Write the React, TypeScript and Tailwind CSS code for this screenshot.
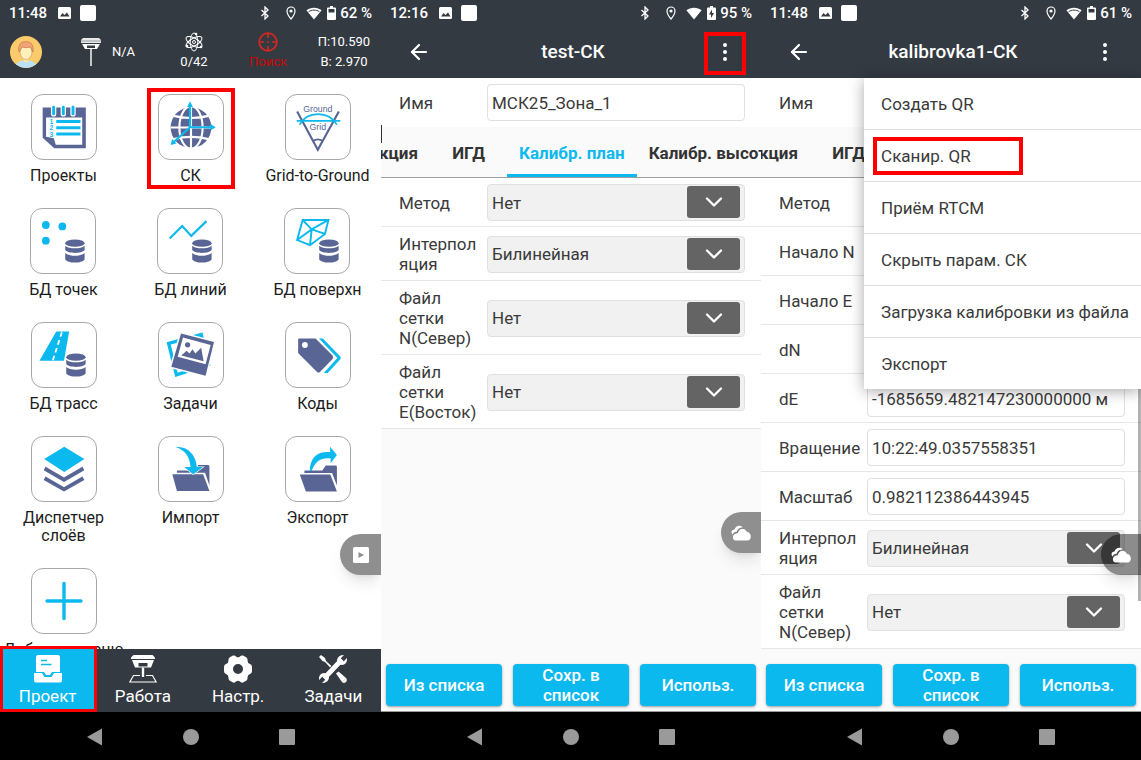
import type { ReactNode } from "react";
import { ArrowLeft, ChevronDown } from "lucide-react";

const CYAN = "#0cb9ef";
const SLATE = "#596695";

/* ---------- status bar ---------- */

function StatusBar({ time, battery, charging, wifiFull }: { time: string; battery: string; charging?: boolean; wifiFull?: boolean }) {
  return (
    <div className="flex h-[26px] items-center justify-between px-[9px] text-[15px] font-medium leading-5 text-white">
      <div className="flex items-center">
        <span>{time}</span>
        <svg className="ml-[11px] h-3 w-[13px]" viewBox="0 0 13 12">
          <rect width="13" height="12" rx="1.5" fill="#fff" />
          <path d="M2 9.5 4.5 6l2 2L9 5.5l2.5 4Z" fill="#343a42" />
        </svg>
        <span className="ml-[9px] size-4 rounded-[2px] bg-white" />
      </div>
      <div className="flex items-center">
        <svg className="mr-4 h-[14px] w-[10px]" viewBox="0 0 10 14" fill="none" stroke="#fff" strokeWidth="1.3">
          <path d="M1.5 4 8 10 5 13V1l3 3-6.5 6" />
        </svg>
        <svg className="mr-[10px] h-[14px] w-[10px]" viewBox="0 0 10 14" fill="none" stroke="#fff" strokeWidth="1.2">
          <path d="M5 13C2 9.500 1 7.200 1 5a4 4 0 0 1 8 0c0 2.200-1 4.500-4 8Z" />
          <circle cx="5" cy="5" r="1" fill="#fff" />
        </svg>
        <svg className="mr-[5px] h-[13px] w-4" viewBox="0 0 16 13">
          <path d="M8 12.500.4 3.300C4.500-.2 11.500-.2 15.600 3.300Z" fill="#fff" />
          {!wifiFull && <path d="M2.600 4.700C5.600 2.600 10.400 2.600 13.400 4.700" fill="none" stroke="#343a42" strokeWidth="1" />}
        </svg>
        <svg className="mr-1 h-[14px] w-[9px]" viewBox="0 0 9 14">
          <path d="M3 0h3v1.500h2q1 0 1 1V13q0 1-1 1H1q-1 0-1-1V2.500q0-1 1-1h2Z" fill="#fff" />
          {charging ? (
            <path d="M5 3.500 2 8.500h2v3.500l3-5H5Z" fill="#343a42" />
          ) : (
            <path d="M1.500 3h6v3.500h-6Z" fill="#343a42" />
          )}
        </svg>
        <span>{battery}</span>
      </div>
    </div>
  );
}

function SystemNav() {
  return (
    <nav className="flex h-12 shrink-0 items-center justify-center gap-20 bg-black pt-0.5">
      <button aria-label="Back">
        <svg className="h-[18px] w-4" viewBox="0 0 16 18">
          <path d="M0 9 15 .5v17Z" fill="#9a9a9a" />
        </svg>
      </button>
      <button aria-label="Home" className="size-4 rounded-full bg-[#9a9a9a]" />
      <button aria-label="Recent" className="size-4 rounded-[1px] bg-[#9a9a9a]" />
    </nav>
  );
}

/* ---------- icons of the project screen, 66x66 box ---------- */

function Database() {
  return (
    <g fill={SLATE}>
      <ellipse cx="45.300" cy="35.200" rx="10" ry="3.800" />
      <path d="M35.300 37.800c4 3.700 16 3.700 20 0v4.500c-3 4-17 4-20 0Z" />
      <path d="M35.300 45.500c4 3.700 16 3.700 20 0v6.500c-3 4.300-17 4.300-20 0Z" />
    </g>
  );
}

const icons: Record<string, ReactNode> = {
  projects: (
    <>
      <path d="M11 13H55.500V55H23L11 44Z" fill={SLATE} />
      <path d="M14.500 23.300H51.800V51.300H24.500L22.500 44.500 14.500 43Z" fill="#fff" />
      {[22.3, 32.3, 42.3].map((x) => (
        <g key={x} strokeLinecap="round">
          <path d={`M${x} 12.500V19.500`} stroke="#fff" strokeWidth="5.500" />
          <path d={`M${x} 12.500V19.500`} stroke={CYAN} strokeWidth="3" />
        </g>
      ))}
      {[27.3, 33.8, 40.3].map((y, i) => (
        <g key={y}>
          <path d={`M25 ${y}H50`} stroke={CYAN} strokeWidth="3" />
          <text x="18" y={y + 2.5} fontSize="7" fontWeight="700" fill={CYAN}>{i + 1}</text>
        </g>
      ))}
    </>
  ),
  globe: (
    <>
      <circle cx="33" cy="33.500" r="21" fill={SLATE} />
      <g fill="none" stroke="#fff" strokeWidth="2.200">
        <path d="M33 12V55M12 33.500H54" />
        <ellipse cx="33" cy="33.500" rx="12" ry="22" />
        <path d="M15 21.500Q33 26 51 21.500M15 45.500Q33 41 51 45.500" />
      </g>
      <g fill="none" stroke={CYAN} strokeWidth="2.200">
        <path d="M32 10V33.300H55M32 33.300 14 49.500" />
      </g>
      <g fill={CYAN}>
        <path d="M32 6.500 35 12.500H29ZM58.500 33.300 53 36.500V30ZM12 51.500 13.500 45.500 18 50Z" />
      </g>
    </>
  ),
  gridToGround: (
    <>
      <path d="M11.500 17 32.800 56.500 54.500 17" fill="none" stroke={SLATE} strokeWidth="2.200" />
      <path d="M27.500 47.500Q32.800 44 38 47.500" fill="none" stroke={SLATE} strokeWidth="1.800" />
      <path d="M11 26.700H56M14 30.500C22 16 44 16 52.500 30.500" fill="none" stroke={CYAN} strokeWidth="1.800" />
      <text x="32.800" y="17.500" fontSize="9" textAnchor="middle" fill={SLATE}>Ground</text>
      <text x="32.800" y="35.800" fontSize="9" textAnchor="middle" fill={SLATE}>Grid</text>
    </>
  ),
  points: (
    <>
      <g fill={CYAN}>
        <circle cx="15.300" cy="16.500" r="4" />
        <circle cx="32.300" cy="18" r="4" />
        <circle cx="15.300" cy="32.700" r="4" />
      </g>
      <Database />
    </>
  ),
  lines: (
    <>
      <path d="M12 30.500 25 17.500 34.300 27.700 50 12.500" fill="none" stroke={CYAN} strokeWidth="2.200" />
      <Database />
    </>
  ),
  surfaces: (
    <>
      <path
        d="M18.200 11.300H44.800L41.200 25.700 25.800 37.300 12.500 32ZM18.200 11.300 27.500 21 44.800 11.300M27.500 21 41.200 25.700M27.500 21 25.800 37.300M27.500 21 12.500 32"
        fill="none"
        stroke={CYAN}
        strokeWidth="2"
      />
      <Database />
    </>
  ),
  roads: (
    <>
      <path d="M25 8.700H38.300L33 39H7.700Z" fill={CYAN} />
      <path d="M30.800 9.500 21.500 38.500" stroke="#fff" strokeWidth="1.800" strokeDasharray="5 3.500" />
      <Database />
    </>
  ),
  photos: (
    <>
      <path d="M10 21 43.500 12 51 43 18 53.500Z" fill="none" stroke={CYAN} strokeWidth="3.500" />
      <path d="M22.700 10.700 56.700 19.700 48 54.500 12.700 45Z" fill={SLATE} stroke="#fff" strokeWidth="3" paintOrder="stroke" />
      <path d="M24.700 15 53.300 22.700 48 42.500 19.300 34.700Z" fill="#fff" />
      <circle cx="29.500" cy="22.500" r="2.700" fill={SLATE} />
      <path d="M23 33.500 28.500 28.500 31.500 31.500 34.500 27 37.500 31.500 43.500 25.500 46 39.500Z" fill={SLATE} />
    </>
  ),
  codes: (
    <>
      <path d="M12.500 17Q12.500 16 13.500 16H30.500L48 33.500Q49.500 35.500 48 37L35 50.500Q33.500 51.800 32 50.500L12.500 31Z" fill={SLATE} />
      <circle cx="19.500" cy="22.700" r="3" fill="#fff" />
      <path d="M34 16H38L56 34.500Q57 36 56 37.500L43 51.500H39L53 36Z" fill={CYAN} />
    </>
  ),
  layers: (
    <>
      <path d="M33.300 10 54 22.800 33.300 36 12.500 22.800Z" fill={CYAN} />
      <path d="M13 32.500 33 44 53 32.500M13 42.500 33 54 53 42.500" fill="none" stroke={SLATE} strokeWidth="4" />
    </>
  ),
  importFolder: (
    <>
      <path d="M18.500 36.800V34.500H37L40.500 29H50.500Q52 29 52 30.500V50L47.500 36.800Z" fill={SLATE} />
      <path d="M13.700 38.500H45.500L52 55.700H18.500Z" fill={SLATE} />
      <path d="M17.500 10.500C29 9 38 18 39 31H45.500L35.300 38.500 26 31H32.500C32 20 26 13 17.500 10.500Z" fill={CYAN} stroke="#fff" strokeWidth="1.200" paintOrder="stroke" />
    </>
  ),
  exportFolder: (
    <>
      <path d="M19 37V34.500H37.500L41 29.500H51Q52.500 29.500 52.500 31V50L47.500 37Z" fill={SLATE} />
      <path d="M14.200 38.800H45.700L52.500 56.300H20.500Z" fill={SLATE} />
      <path d="M24.500 35C25 20 33 14.500 45.500 15.500V10L52.500 18.500 46 27V22C36 21 30 25 26.500 35Z" fill={CYAN} />
    </>
  ),
  plus: <path d="M33 15V51M15.500 33H50.500" stroke={CYAN} strokeWidth="3.500" strokeLinecap="round" />,
};

const tiles = [
  { label: "Проекты", icon: "projects" },
  { label: "СК", icon: "globe", marked: true },
  { label: "Grid-to-Ground", icon: "gridToGround" },
  { label: "БД точек", icon: "points" },
  { label: "БД линий", icon: "lines" },
  { label: "БД поверхн", icon: "surfaces" },
  { label: "БД трасс", icon: "roads" },
  { label: "Задачи", icon: "photos" },
  { label: "Коды", icon: "codes" },
  { label: "Диспетчер слоёв", icon: "layers" },
  { label: "Импорт", icon: "importFolder" },
  { label: "Экспорт", icon: "exportFolder" },
  { label: "Добавить меню", icon: "plus" },
];

/* ---------- bottom tabs ---------- */

const tabs = [
  {
    label: "Проект",
    active: true,
    icon: (
      <>
        <path d="M4 0H24Q26 0 26 2V17H18L16 20H12L10 17H2V2Q2 0 4 0Z" />
        <path d="M7 5.500H13M7 9.500H17.500" stroke={CYAN} strokeWidth="1.500" />
        <path d="M0 18H8L10.500 22H17.500L20 18H28V25.500Q28 27.500 26 27.500H2Q0 27.500 0 25.500Z" />
      </>
    ),
  },
  {
    label: "Работа",
    icon: (
      <>
        <path d="M4.500 0H23.500L26 2.500V4H2V2.500Z" />
        <path d="M3 5H25L22 12.500H6ZM9.500 8V11.500H18.500V8Z" fillRule="evenodd" />
        <path d="M12.800 12.500H15.200V22H12.800Z" />
        <path d="M11 20.500H4.500L.8 27H27.200L23.500 20.500H17" fill="none" stroke="#fff" strokeWidth="1.200" />
      </>
    ),
  },
  {
    label: "Настр.",
    icon: (
      <path
        d="M9 0.500Q11 0 12 1.500 14 3.200 16 1.500 17 0 19 .5L22.500 2.500Q24 3.800 23.500 5.500 23.500 8.300 26 9 28 9.500 28 12V16Q28 18.500 26 19 23.500 19.700 23.500 22.500 24 24.200 22.500 25.500L19 27.500Q17 28 16 26.500 14 24.800 12 26.500 11 28 9 27.500L5.500 25.500Q4 24.200 4.500 22.500 4.500 19.700 2 19 0 18.500 0 16V12Q0 9.500 2 9 4.500 8.300 4.500 5.500 4 3.800 5.500 2.500ZM14 9A5 5 0 1 0 14 19 5 5 0 1 0 14 9Z"
        fillRule="evenodd"
      />
    ),
  },
  {
    label: "Задачи",
    icon: (
      <>
        <path d="M0 2 2 0 6 3 7 6 14.500 13 13 14.500 6 7 3.500 6Z" />
        <path d="M17 18.500 19.500 16.500 27 23Q29 25.500 26.500 27.500 24.500 28.500 23 27Z" />
        <path d="M6 22 22 6" stroke="#343a42" strokeWidth="6.500" />
        <path d="M5 23.500 23 4.500" stroke="#fff" strokeWidth="4.800" />
        <path d="M25 0 21.500 3.500 24.500 6.500 28 3Q28.500 9.500 23 10 17.500 9.500 18 5 19 0 25 0Z" />
        <path d="M3 28 6.500 24.500 3.500 21.500 0 25Q-.5 18.500 5 18 10.500 18.500 10 23 9 28 3 28Z" />
      </>
    ),
  },
];

function ProjectScreen() {
  return (
    <section className="relative flex min-h-0 min-w-0 flex-col overflow-hidden bg-white">
      <header className="bg-[#343a42] text-white">
        <StatusBar time="11:48" battery="62 %" />
        <div className="grid h-[52px] grid-cols-[52fr_112fr_60fr_88fr_64fr] items-center pr-[5px] text-[13px] leading-5">
          <svg className="size-8 justify-self-center" viewBox="0 0 32 32">
            <circle cx="16" cy="16" r="16" fill="#fbcb6b" />
            <path d="M6 28.500Q8 25 13 24.500H19Q24 25 26 28.500 16 35.500 6 28.500Z" fill="#b9e1f7" />
            <path d="M13.500 20H18.500V25Q16 28 13.500 25Z" fill="#fde5a8" />
            <ellipse cx="16" cy="16" rx="6" ry="7.500" fill="#fdf0b8" stroke="#c98e5e" strokeWidth=".6" />
            <path d="M9 16Q7 6 15.500 5.500 24.500 5.500 23 16 21 13 20.500 11 16 12.500 12 11Q11 13.500 9 16Z" fill="#f2a477" stroke="#b96d4a" strokeWidth=".6" />
          </svg>
          <div className="flex items-center justify-center gap-[11px]">
            <svg className="h-7 w-5" viewBox="0 0 20 28">
              <path d="M2 0H18L20 2V5H0V2Z" fill="#e8e8e8" />
              <path d="M0 3H20" stroke="#9b9fa4" strokeWidth="1" />
              <path d="M1 6H19L16 11H4ZM6 7.500V10H14V7.500Z" fill="#fff" fillRule="evenodd" />
              <path d="M10 11V28" stroke="#d6d6d6" strokeWidth="1.800" />
            </svg>
            <span>N/A</span>
          </div>
          <div className="flex flex-col items-center">
            <svg className="size-5" viewBox="0 0 20 20" fill="none" stroke="#fff" strokeWidth="1">
              <ellipse cx="10" cy="10" rx="3.800" ry="9" />
              <ellipse cx="10" cy="10" rx="3.800" ry="9" transform="rotate(60 10 10)" />
              <ellipse cx="10" cy="10" rx="3.800" ry="9" transform="rotate(120 10 10)" />
              <circle cx="10" cy="10" r="1.500" />
              <g fill="#fff" stroke="none">
                <circle cx="12" cy="2" r="1.300" />
                <circle cx="3" cy="14" r="1.300" />
                <circle cx="17" cy="15" r="1.300" />
              </g>
            </svg>
            <span>0/42</span>
          </div>
          <div className="flex flex-col items-center text-[#c80808]">
            <svg className="size-5" viewBox="0 0 20 20" fill="none" stroke="#d3281f" strokeWidth="1.700">
              <circle cx="10" cy="10" r="8.800" />
              <path d="M10 1V6M10 14V19M1 10H6M14 10H19" />
              <circle cx="10" cy="10" r="1" fill="#d3281f" stroke="none" />
            </svg>
            <span>Поиск</span>
          </div>
          <div className="flex flex-col items-center">
            <span>П:10.590</span>
            <span>В: 2.970</span>
          </div>
        </div>
      </header>

      <main className="grid min-h-0 flex-1 grid-cols-3 content-start gap-y-[23px] overflow-hidden pt-4">
        {tiles.map((tile) => (
          <div key={tile.label} className="flex justify-center">
            <button className="relative flex flex-col items-center gap-[7px] text-base leading-[18px] text-[#1c1c1c]">
              <svg className="size-[66px] rounded-xl border border-[#a8a8a8] font-['Liberation_Sans',sans-serif]" viewBox="0 0 66 66">
                {icons[tile.icon]}
              </svg>
              <span className="max-w-[124px]">{tile.label}</span>
              {tile.marked && <span className="absolute -inset-x-[11px] -bottom-1 -top-1.5 border-4 border-[#fe0000]" />}
            </button>
          </div>
        ))}
      </main>

      <button aria-label="Play" className="absolute right-0 top-[534px] flex h-[41px] w-[41px] items-center justify-center rounded-l-full bg-[#8f8f8f] shadow-lg">
        <svg className="size-4" viewBox="0 0 16 16">
          <rect width="16" height="16" rx="1.500" fill="#fff" />
          <path d="M5.500 5V11L11 8Z" fill="#8f8f8f" />
        </svg>
      </button>

      <nav className="grid h-[63px] shrink-0 grid-cols-4 bg-[#343a42] text-white">
        {tabs.map((tab) => (
          <button
            key={tab.label}
            className={`relative flex flex-col items-center gap-[3px] pt-1.5 text-[17px] leading-5 ${tab.active ? "bg-[#0cb9ef]" : ""}`}
          >
            <svg className="size-7" viewBox="0 0 28 28" fill="#fff">
              {tab.icon}
            </svg>
            <span>{tab.label}</span>
            {tab.active && <span className="absolute -right-0.5 -top-[3px] bottom-0 left-0 border-[3px] border-[#fe0000]" />}
          </button>
        ))}
      </nav>
      <SystemNav />
    </section>
  );
}

/* ---------- coordinate system editor ---------- */

type Field = { id: string; label: string; value: string; select?: boolean };

function FieldRow({ field }: { field: Field }) {
  return (
    <div className="flex items-center gap-1 border-b border-[#e6e6e6] bg-white pb-[5px] pl-[18px] pr-4 pt-1.5">
      <label htmlFor={field.id} className="w-[84px] shrink-0 break-words py-px">
        {field.label}
      </label>
      {field.select ? (
        <div className="relative min-w-0 flex-1">
          <select
            id={field.id}
            defaultValue={field.value}
            className="block h-[37px] w-full appearance-none rounded border border-[#e0e0e0] bg-[#f1f1f1] pl-1"
          >
            <option>{field.value}</option>
          </select>
          <span className="pointer-events-none absolute right-[5px] top-[2px] flex h-8 w-[53px] items-center justify-center rounded-[3px] bg-[#646464]">
            <ChevronDown className="size-7 text-white" strokeWidth={2} />
          </span>
        </div>
      ) : (
        <input
          id={field.id}
          defaultValue={field.value}
          className="h-[37px] min-w-0 flex-1 rounded border border-[#e0e0e0] bg-white pl-1"
        />
      )}
    </div>
  );
}

function Cloud() {
  return (
    <svg className="h-4 w-5" viewBox="0 0 20 16" fill="#fff">
      <path d="M1.500 9.500C-.5 7 1 4.500 3.500 4.500 4.500 .5 9.500-.5 12 2.500 8.500 2.500 6.500 4 5.800 6.500 3.500 6.800 2.200 8 1.500 9.500Z" />
      <path d="M4.800 15.500C1.300 15.500 1 10.500 3.500 9.300 4.500 8.300 5.800 8.100 6.800 8.200 7.500 3 13.800 2 15.800 6.800 20.500 7.200 21.500 15 16.500 15.500Z" />
      <path d="M2.500 9.500C4 7.500 5.500 7.500 6.500 7.500 7.500 3.500 10.500 2.700 13 3.300" fill="none" stroke="#7b7b7b" strokeWidth=".8" />
    </svg>
  );
}

const menuItems = ["Создать QR", "Сканир. QR", "Приём RTCM", "Скрыть парам. СК", "Загрузка калибровки из файла", "Экспорт"];

type EditorProps = {
  id: string;
  title: string;
  time: string;
  battery: string;
  charging?: boolean;
  name: string;
  fields: Field[];
  menuOpen?: boolean;
};

function EditorScreen({ id, title, time, battery, charging, name, fields, menuOpen }: EditorProps) {
  return (
    <section className="relative flex min-h-0 min-w-0 flex-col overflow-hidden bg-[#fafafa] text-[17px] leading-5 text-[#3a3a3a]">
      <header className="bg-[#343a42] text-white">
        <StatusBar time={time} battery={battery} charging={charging} wifiFull={charging} />
        <div className="flex h-[52px] items-center justify-between px-[26px]">
          <button aria-label="Back">
            <ArrowLeft className="size-6" strokeWidth={2.2} />
          </button>
          <h1 className="text-[19px] font-medium">{title}</h1>
          <button aria-label="Menu" className="relative flex h-6 w-5 flex-col items-center justify-center gap-[3px]">
            <span className="size-1 rounded-full bg-white" />
            <span className="size-1 rounded-full bg-white" />
            <span className="size-1 rounded-full bg-white" />
            {!menuOpen && <span className="absolute -inset-x-[11px] -bottom-[11px] -top-2 border-4 border-[#fe0000]" />}
          </button>
        </div>
      </header>

      <div className="relative flex items-center gap-1 bg-white py-1.5 pl-[18px] pr-4">
        <label htmlFor={`${id}-name`} className="w-[84px] shrink-0">Имя</label>
        <input
          id={`${id}-name`}
          defaultValue={name}
          className="h-[37px] min-w-0 flex-1 rounded border border-[#e0e0e0] bg-white pl-1"
        />
        {!menuOpen && <span className="absolute -bottom-4 left-0 h-[18px] w-px bg-[#333]" />}
      </div>

      <div className="flex h-[51px] shrink-0 overflow-hidden whitespace-nowrap border-b border-[#a0a0a0] font-bold text-[#333]">
        <button className="flex w-[49px] shrink-0 items-center justify-end overflow-hidden pr-3 pt-0.5">Проекция</button>
        <button className="w-[77px] shrink-0 pt-0.5">ИГД</button>
        <button className="shrink-0 border-b-[3px] border-[#0cb9ef] px-3 pt-[5px] text-[#0cb9ef]">Калибр. план</button>
        <button className="shrink-0 px-3 pt-0.5">Калибр. высот</button>
      </div>

      <main className="min-h-0 flex-1 overflow-hidden">
        {fields.map((field) => (
          <FieldRow key={field.id} field={field} />
        ))}
      </main>

      <footer className="grid shrink-0 grid-cols-3 gap-[11px] border-b border-[#9a9a9a] bg-[#fafafa] px-[5px] pb-[5px] pt-1.5 font-medium text-white">
        <button className="h-[42px] rounded bg-[#0cb9ef] shadow-sm shadow-black/30">Из списка</button>
        <button className="h-[42px] rounded bg-[#0cb9ef] px-6 shadow-sm shadow-black/30">Сохр. в список</button>
        <button className="h-[42px] rounded bg-[#0cb9ef] shadow-sm shadow-black/30">Использ.</button>
      </footer>
      <SystemNav />

      {menuOpen && (
        <>
          <span className="absolute right-0 top-[388px] h-[213px] w-[3px] bg-black/30" />
          <ul className="absolute right-0 top-[78px] divide-y divide-[#dedede] bg-white shadow-[0_2px_14px_rgba(0,0,0,0.35)]">
            {menuItems.map((item) => (
              <li key={item} className="relative">
                <button className="block w-full pb-[15px] pl-[17px] pr-3 pt-[17px] text-left leading-[19px]">{item}</button>
                {item === "Сканир. QR" && (
                  <span className="absolute bottom-1.5 left-[9px] top-[7px] w-[150px] border-4 border-[#fe0000]" />
                )}
              </li>
            ))}
          </ul>
        </>
      )}

      <button
        aria-label="Cloud"
        className={`absolute right-0 flex h-[41px] w-10 items-center justify-center rounded-l-full shadow-lg ${
          menuOpen ? "top-[534px] bg-black/45" : "top-[512px] bg-[#8f8f8f]"
        }`}
      >
        <Cloud />
      </button>
    </section>
  );
}

const testFields: Field[] = [
  { id: "test-method", label: "Метод", value: "Нет", select: true },
  { id: "test-interp", label: "Интерполяция", value: "Билинейная", select: true },
  { id: "test-north", label: "Файл сетки N(Север)", value: "Нет", select: true },
  { id: "test-east", label: "Файл сетки E(Восток)", value: "Нет", select: true },
];

const calibrationFields: Field[] = [
  { id: "cal-method", label: "Метод", value: "", select: true },
  { id: "cal-n", label: "Начало N", value: "" },
  { id: "cal-e", label: "Начало E", value: "" },
  { id: "cal-dn", label: "dN", value: "" },
  { id: "cal-de", label: "dE", value: "-1685659.482147230000000 м" },
  { id: "cal-rotation", label: "Вращение", value: "10:22:49.0357558351" },
  { id: "cal-scale", label: "Масштаб", value: "0.982112386443945" },
  { id: "cal-interp", label: "Интерполяция", value: "Билинейная", select: true },
  { id: "cal-north", label: "Файл сетки N(Север)", value: "Нет", select: true },
];

export default function App() {
  return (
    <div className="grid h-screen grid-cols-[381fr_380fr_380fr] grid-rows-1 bg-black font-[Roboto,sans-serif]">
      <ProjectScreen />
      <EditorScreen id="test" title="test-СК" time="12:16" battery="95 %" charging name="МСК25_Зона_1" fields={testFields} />
      <EditorScreen id="cal" title="kalibrovka1-СК" time="11:48" battery="61 %" name="" fields={calibrationFields} menuOpen />
    </div>
  );
}
